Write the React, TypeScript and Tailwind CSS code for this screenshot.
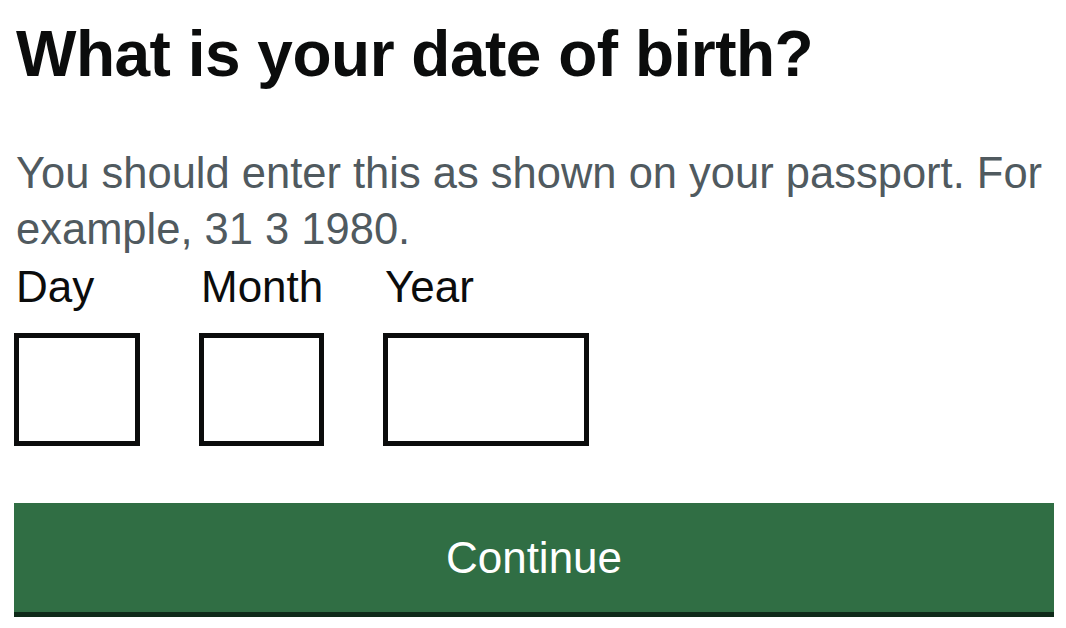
import React from 'react';

const fields = [
  { id: 'day', label: 'Day', width: 'w-[126px]' },
  { id: 'month', label: 'Month', width: 'w-[125px]' },
  { id: 'year', label: 'Year', width: 'w-[206px]' },
];

export default function App() {
  return (
    <div className="w-[1066px] h-[628px] bg-white pl-[14px] pr-[12px] overflow-hidden font-['Liberation_Sans',Arial,sans-serif]">
      <h1 className="pt-[22px] pl-[2px] text-[64px] leading-none font-bold text-[#0b0c0c] tracking-[-0.5px]">
        What is your date of birth?
      </h1>

      <p className="mt-[59px] pl-[2px] text-[43.5px] leading-[56px] text-[#505a5f]">
        You should enter this as shown on your passport. For example, 31 3 1980.
      </p>

      {/* Date inputs */}
      <div className="flex gap-[59px] mt-[2px]">
        {fields.map((f) => (
          <div key={f.id} className="flex flex-col">
            <label htmlFor={f.id} className="pl-[2px] text-[44px] leading-[56px] text-[#0b0c0c]">
              {f.label}
            </label>
            <input
              id={f.id}
              type="text"
              className={`${f.width} h-[113px] mt-[18px] border-[5px] border-[#0b0c0c] bg-white outline-none`}
            />
          </div>
        ))}
      </div>

      <button className="mt-[57px] w-[1040px] h-[109px] bg-[#306e44] shadow-[0_5px_0_#0f2a19] text-white text-[44px] leading-none">
        Continue
      </button>
    </div>
  );
}
